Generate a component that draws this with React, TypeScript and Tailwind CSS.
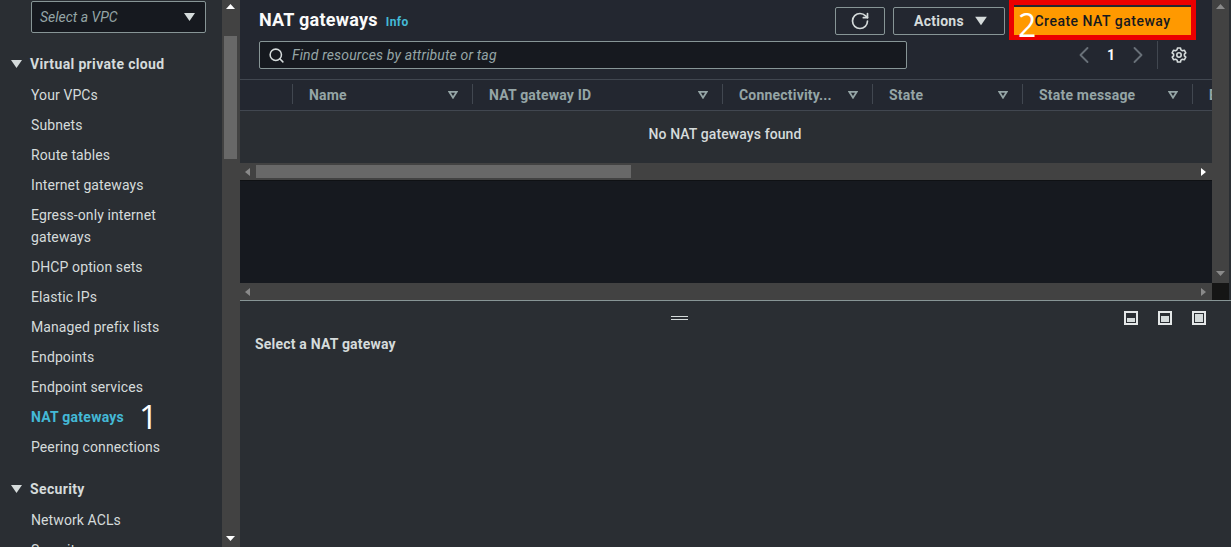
import { ChevronLeft, ChevronRight, RotateCw, Search } from 'lucide-react'

const vpcLinks = [
  'Your VPCs',
  'Subnets',
  'Route tables',
  'Internet gateways',
  'Egress-only internet gateways',
  'DHCP option sets',
  'Elastic IPs',
  'Managed prefix lists',
  'Endpoints',
  'Endpoint services',
  'NAT gateways',
  'Peering connections',
]

const columns = [
  { label: 'Name', width: 'w-[180px]' },
  { label: 'NAT gateway ID', width: 'w-[250px]' },
  { label: 'Connectivity...', width: 'w-[150px]' },
  { label: 'State', width: 'w-[150px]' },
  { label: 'State message', width: 'w-[170px]' },
]

const Caret = ({ className }: { className: string }) => (
  <svg viewBox="0 0 14 12" className={className} fill="currentColor">
    <path d="M0 1h14L7 11z" />
  </svg>
)

const SortIcon = () => (
  <svg viewBox="0 0 12 10" className="absolute right-[14px] top-[7px] h-[8px] w-[10px] text-[#95a5a6]" fill="none" stroke="currentColor" strokeWidth="2.2">
    <path d="M1.5 1.2h9L6 8.4z" />
  </svg>
)

const Arrow = ({ dir, className }: { dir: 'up' | 'down' | 'left' | 'right'; className: string }) => {
  const points = { up: '0,5 4.5,0 9,5', down: '0,0 9,0 4.5,5', left: '5,0 5,8 0,4', right: '0,0 0,8 5,4' }
  const box = dir === 'up' || dir === 'down' ? '0 0 9 5' : '0 0 5 8'
  const size = dir === 'up' || dir === 'down' ? 'h-[5px] w-[9px]' : 'h-[8px] w-[5px]'
  return (
    <svg viewBox={box} className={`${size} ${className}`} fill="currentColor">
      <polygon points={points[dir]} />
    </svg>
  )
}

const PaneIcon = ({ fill }: { fill: string }) => (
  <div className="flex h-[14px] w-[14px] items-end border-2 border-[#e4e7e8] p-[1px]">
    <div className={`w-full bg-[#d5dbdb] ${fill}`} />
  </div>
)

const Sidebar = () => (
  <aside className="w-[222px] shrink-0 bg-[#2a2e33] pl-[31px] pr-4 tracking-[0.1px]">
    <div className="mt-px flex h-[32px] items-center justify-between rounded-[2px] border border-[#879596] bg-[#16191f] pl-2 pr-[10px] italic tracking-normal text-[#95a5a6]">
      <span>Select a VPC</span>
      <Caret className="h-[10px] w-[11px] text-[#d5dbdb]" />
    </div>

    <div className="relative mt-5 -ml-px font-bold tracking-[0.35px] text-[#d5dbdb]">
      <Caret className="absolute -left-[19px] top-[6px] h-[10px] w-[11px]" />
      Virtual private cloud
    </div>
    <ul className="mt-[9px] flex flex-col gap-2">
      {vpcLinks.map((link) => (
        <li key={link} className={link === 'NAT gateways' ? 'font-bold tracking-[0.25px] text-[#44b9d6]' : 'text-[#d5dbdb]'}>
          {link}
        </li>
      ))}
    </ul>

    <div className="relative mt-5 -ml-px font-bold tracking-[0.35px] text-[#d5dbdb]">
      <Caret className="absolute -left-[19px] top-[6px] h-[10px] w-[11px]" />
      Security
    </div>
    <ul className="mt-[9px] flex flex-col gap-2 text-[#d5dbdb]">
      <li>Network ACLs</li>
      <li>Security groups</li>
    </ul>
  </aside>
)

const SideScrollbar = () => (
  <div className="flex w-[18px] shrink-0 flex-col items-center bg-[#424242] pr-px">
    <Arrow dir="up" className="mt-[4px] text-white" />
    <div className="mt-[27px] h-[123px] w-[13px] bg-[#686868]" />
    <Arrow dir="down" className="mt-auto mb-[6px] text-white" />
  </div>
)

const Toolbar = () => (
  <>
    <div className="flex h-[41px] items-start pl-[19px]">
      <div className="flex items-baseline pt-[8px]">
        <h1 className="text-lg font-bold leading-6 tracking-[0.25px] text-[#fafafa]">NAT gateways</h1>
        <span className="ml-2 text-xs font-bold tracking-[0.4px] text-[#44b9d6]">Info</span>
      </div>
      <button className="ml-auto mt-[7px] flex h-[28px] w-[50px] items-center justify-center rounded-[2px] border border-[#879596] text-[#d5dbdb]">
        <RotateCw size={20} strokeWidth={2} />
      </button>
      <button className="ml-2 mt-[7px] flex h-[28px] w-[112px] items-center justify-center gap-[11px] rounded-[2px] border border-[#879596] pl-[3px] font-bold tracking-[0.25px] text-[#d5dbdb]">
        Actions
        <Caret className="h-[10px] w-[12px]" />
      </button>
      <div className="relative ml-1 mr-[16px] h-[40px] w-[187px] border-[5px] border-[#eb0000] bg-[#232730] pt-[2px]">
        <button className="flex h-[28px] w-full items-center justify-center bg-[#ff9900] text-[14px] font-medium tracking-[0.5px] text-[#16191f]">
          Create NAT gateway
        </button>
        <span className="absolute left-[4px] top-0 font-['Open_Sans',sans-serif] text-[32px] leading-[40px] text-white">2</span>
      </div>
    </div>

    <div className="flex h-[28px] items-center pl-[19px]">
      <div className="flex h-[28px] w-[648px] items-center rounded-[2px] border border-[#879596] bg-[#16191f] pl-2 italic tracking-[0.15px] text-[#95a5a6]">
        <Search size={17} strokeWidth={2.2} className="mr-[7px] text-[#d5dbdb]" />
        Find resources by attribute or tag
      </div>
      <ChevronLeft size={28} strokeWidth={1.6} className="ml-[163px] shrink-0 text-[#687078]" />
      <span className="ml-[9px] w-[7px] text-center font-bold text-[#fafafa]">1</span>
      <ChevronRight size={28} strokeWidth={1.6} className="ml-[10px] shrink-0 text-[#687078]" />
      <div className="ml-[5px] h-[28px] w-px shrink-0 bg-[#414750]" />
      {/* gear is the console's own shape, lucide's has too many teeth */}
      <svg viewBox="0 0 16 16" className="ml-[13px] h-[16px] w-[16px] shrink-0 text-[#d5dbdb]" fill="none" stroke="currentColor" strokeWidth="1.6" strokeLinejoin="round">
        <path d="M6.5 1h3l.4 1.9 1.5.9 1.9-.6 1.5 2.6-1.4 1.3v1.8l1.4 1.3-1.5 2.6-1.9-.6-1.5.9-.4 1.9h-3l-.4-1.9-1.5-.9-1.9.6-1.5-2.6 1.4-1.3V7.1L1.1 5.8l1.5-2.6 1.9.6 1.5-.9z" />
        <circle cx="8" cy="8" r="2.2" />
      </svg>
    </div>
  </>
)

const TableHead = () => (
  <div className="mt-[10px] flex h-[32px] overflow-hidden border-y border-[#414750] pt-[4px] font-bold tracking-[0.2px] text-[#95a5a6]">
    <div className="w-[52px] shrink-0" />
    {columns.map((col) => (
      <div key={col.label} className={`relative h-[20px] shrink-0 border-l border-[#414750] pl-[16px] pt-px leading-[20px] ${col.width}`}>
        {col.label}
        <SortIcon />
      </div>
    ))}
    <div className="h-[20px] shrink-0 border-l border-[#414750] pl-[16px] pt-px leading-[20px]">Elastic</div>
  </div>
)

const HScrollbar = ({ thumb }: { thumb: boolean }) => (
  <div className="flex h-[17px] items-center bg-[#424242]">
    <Arrow dir="left" className="ml-[5px] text-[#8a8a8a]" />
    {thumb ? <div className="ml-[6px] h-[13px] w-[375px] bg-[#686868]" /> : null}
    <Arrow dir="right" className={`ml-auto mr-[6px] ${thumb ? 'text-white' : 'text-[#8a8a8a]'}`} />
  </div>
)

const ListPane = () => (
  <div className="flex h-[300px] shrink-0">
    <div className="flex w-[972px] shrink-0 flex-col">
      <div className="h-[163px] overflow-hidden bg-[#232730]">
        <Toolbar />
        <TableHead />
        <div className="flex h-[53px] items-center justify-center bg-[#2a2e33] pb-[7px] pr-[2px] font-medium tracking-[0.1px] text-[#d5dbdb]">
          No NAT gateways found
        </div>
      </div>
      <HScrollbar thumb />
      <div className="flex-1 border-t border-[#0f1114] bg-[#16191f]" />
      <HScrollbar thumb={false} />
    </div>
    <div className="flex w-[17px] shrink-0 flex-col items-center">
      <div className="flex h-[283px] w-full flex-col items-center bg-[#424242]">
        <Arrow dir="up" className="mt-[4px] text-[#8a8a8a]" />
        <Arrow dir="down" className="mt-auto mb-[7px] text-[#8a8a8a]" />
      </div>
      <div className="h-[17px] w-full bg-[#151515]" />
    </div>
    <div className="flex-1 bg-[#2a2e33]" />
  </div>
)

const DetailPane = () => (
  <div className="flex-1 border-t border-[#879596] bg-[#2a2e33] pl-[15px]">
    <div className="relative h-[32px]">
      <div className="absolute left-[416px] top-[15px] h-[4px] w-[17px] border-y border-[#d5dbdb]" />
      <div className="absolute right-[25px] top-[10px] flex gap-5">
        <PaneIcon fill="h-[4px]" />
        <PaneIcon fill="h-[6px]" />
        <PaneIcon fill="h-full" />
      </div>
    </div>
    <h2 className="font-bold leading-[22px] tracking-[0.2px] text-[#d5dbdb]">Select a NAT gateway</h2>
  </div>
)

const App = () => {
  return (
    <div className="relative flex h-[547px] w-[1231px] overflow-hidden bg-[#2a2e33] font-['Roboto',sans-serif] text-sm leading-[22px]">
      <Sidebar />
      <SideScrollbar />
      <main className="flex min-w-0 flex-1 flex-col">
        <ListPane />
        <DetailPane />
      </main>
      {/* step number from the original annotation */}
      <span className="absolute left-[139px] top-[397px] font-['Open_Sans',sans-serif] text-[33px] leading-[40px] text-white">1</span>
    </div>
  )
}

export default App
